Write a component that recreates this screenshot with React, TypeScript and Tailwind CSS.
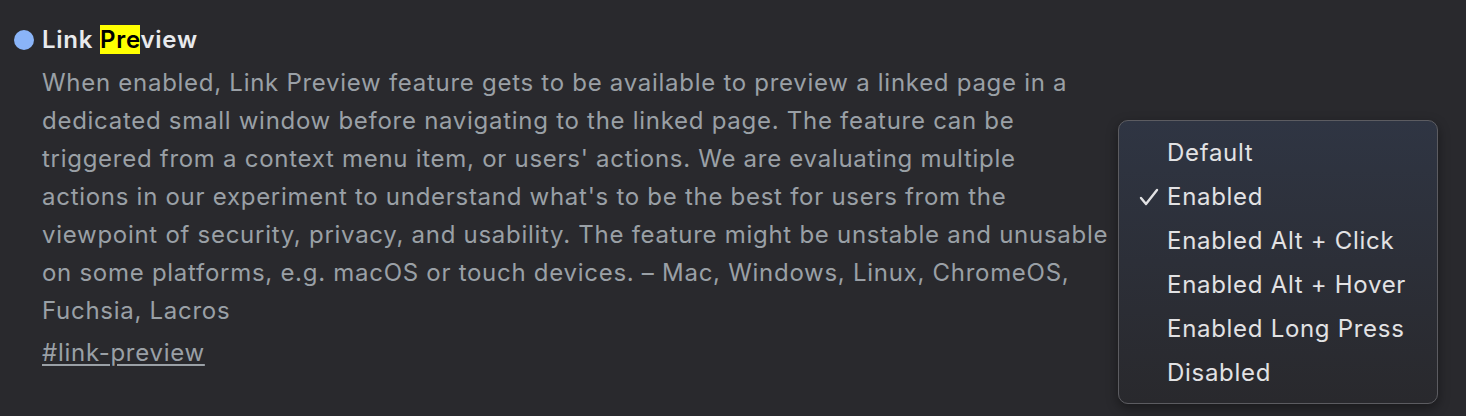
import React from "react";

const items = [
  "Default",
  "Enabled",
  "Enabled Alt + Click",
  "Enabled Alt + Hover",
  "Enabled Long Press",
  "Disabled",
];

const lines = [
  "When enabled, Link Preview feature gets to be available to preview a linked page in a",
  "dedicated small window before navigating to the linked page. The feature can be",
  "triggered from a context menu item, or users' actions. We are evaluating multiple",
  "actions in our experiment to understand what's to be the best for users from the",
  "viewpoint of security, privacy, and usability. The feature might be unstable and unusable",
  "on some platforms, e.g. macOS or touch devices. – Mac, Windows, Linux, ChromeOS,",
  "Fuchsia, Lacros",
];

export default function App() {
  return (
    <div
      className="w-[1466px] h-[416px] bg-[#29292d] flex overflow-hidden"
      style={{ fontFamily: "Inter, 'Noto Sans', sans-serif" }}
    >
      <div className="flex items-start pl-[14px] pt-[25px]">
        <div className="w-[20px] h-[20px] rounded-full bg-[#8ab4f8] mt-[5px] shrink-0" />
        <div className="ml-[8px] w-[1068px]">
          <div className="text-[24px] leading-[30px] font-semibold tracking-[0.75px] text-[#e8eaed]">
            Link <span className="bg-[#ffff00] text-black">Pre</span>view
          </div>
          <p className="mt-[9px] text-[24px] leading-[38px] tracking-[0.72px] text-[#9aa0a6] whitespace-nowrap">
            {lines.map((l, i) => (
              <span key={i} className="block">
                {l}
              </span>
            ))}
          </p>
          <a className="block mt-[4px] text-[24px] leading-[38px] tracking-[0.72px] text-[#9aa0a6] underline underline-offset-[3px]">
            #link-preview
          </a>
        </div>
      </div>
      <div className="ml-[8px] mt-[120px] w-[320px] h-[284px] rounded-[10px] border border-[#5c5c61] bg-gradient-to-b from-[#2f3543] to-[#29292d] pt-[10px] shadow-[0_4px_12px_rgba(0,0,0,0.4)]">
        {items.map((it) => (
          <div key={it} className="h-[44px] flex items-center text-[24px] tracking-[0.7px] text-[#e2e2e4]">
            <span className="w-[48px] flex justify-end pr-[8px]">
              {it === "Enabled" ? (
                <svg width="20" height="20" viewBox="0 0 20 20" fill="none">
                  <path
                    d="M2 11 L7 17 L18 3"
                    stroke="#e2e2e4"
                    strokeWidth="2.4"
                    strokeLinecap="round"
                    strokeLinejoin="round"
                  />
                </svg>
              ) : null}
            </span>
            <span>{it}</span>
          </div>
        ))}
      </div>
    </div>
  );
}
